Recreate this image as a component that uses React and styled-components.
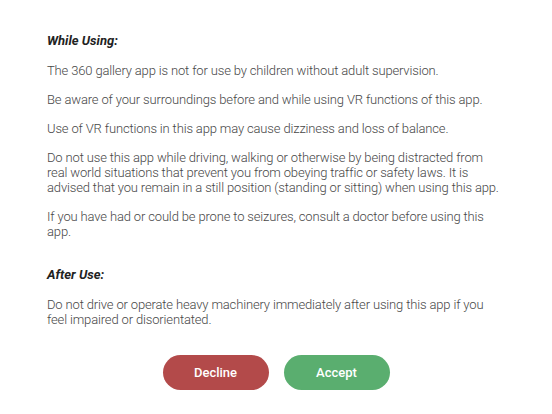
import React from "react";
import styled, { createGlobalStyle } from "styled-components";

const Global = createGlobalStyle`
  html, body { margin: 0; padding: 0; background: #fff; }
  body { font-family: Roboto, "Noto Sans", sans-serif; }
`;

const Page = styled.div`
  width: 552px;
  box-sizing: border-box;
  padding: 33px 47px 0 47px;
  display: flex;
  flex-direction: column;
`;

const Heading = styled.h2`
  margin: 0 0 ${(p) => p.$after}px 0;
  font-size: 13px;
  font-weight: 700;
  font-style: italic;
  color: #222;
  line-height: 16px;
`;

const Para = styled.p`
  margin: 0 0 ${(p) => p.$after ?? 14}px 0;
  font-family: Roboto, sans-serif;
  font-size: 13px;
  font-weight: 300;
  letter-spacing: -0.15px;
  color: #474747;
  line-height: 15px;
`;

const Actions = styled.div`
  display: flex;
  justify-content: center;
  gap: 15px;
  margin-top: 28px;
`;

const Button = styled.button`
  width: 106px;
  height: 35px;
  border: none;
  border-radius: 18px;
  background: ${(p) => p.$bg};
  color: #fff;
  font-family: Roboto, sans-serif;
  font-size: 13px;
  font-weight: 500;
  cursor: pointer;
`;

export default function App() {
  return (
    <>
      <Global />
      <Page>
        <Heading $after={14}>While Using:</Heading>
        <Para>The 360 gallery app is not for use by children without adult supervision.</Para>
        <Para>Be aware of your surroundings before and while using VR functions of this app.</Para>
        <Para>Use of VR functions in this app may cause dizziness and loss of balance.</Para>
        <Para>
          Do not use this app while driving, walking or otherwise by being distracted from real world
          situations that prevent you from obeying traffic or safety laws. It is advised that you remain
          in a still position (standing or sitting) when using this app.
        </Para>
        <Para $after={28}>
          If you have had or could be prone to seizures, consult a doctor before using this app.
        </Para>
        <Heading $after={14}>After Use:</Heading>
        <Para $after={0}>
          Do not drive or operate heavy machinery immediately after using this app if you feel impaired
          or disorientated.
        </Para>
        <Actions>
          <Button $bg="#b34a4a">Decline</Button>
          <Button $bg="#5aae6f">Accept</Button>
        </Actions>
      </Page>
    </>
  );
}
